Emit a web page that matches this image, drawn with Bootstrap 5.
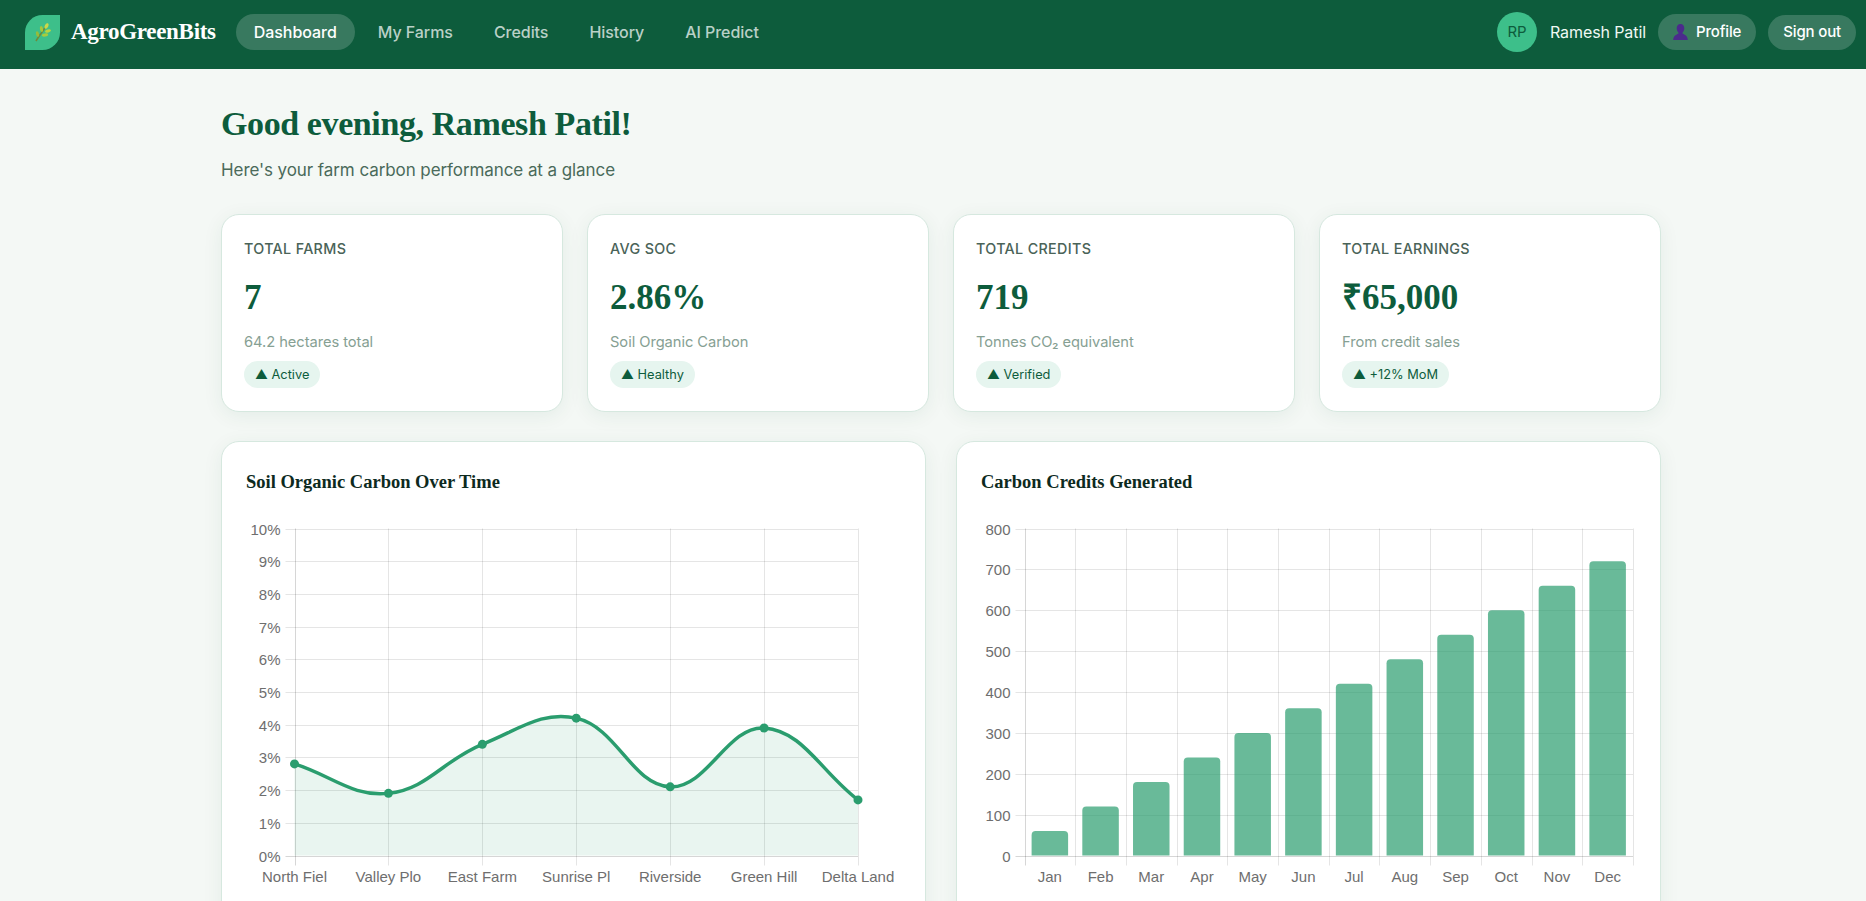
<!DOCTYPE html>
<html lang="en">
<head>
<meta charset="utf-8">
<title>AgroGreenBits</title>
<link href="https://cdn.jsdelivr.net/npm/bootstrap@5.3.0/dist/css/bootstrap.min.css" rel="stylesheet">
<style>
html{overflow:hidden;height:100%}
body{width:1882px;height:901px;overflow:hidden;background:#f4f8f5;font-family:Inter,"Noto Sans",sans-serif;color:#0d5c3c}
.serif{font-family:"Liberation Serif",serif;font-weight:700}
.topbar{height:69px;background:#0d5c3c;padding:0 26px 5px 25px}
.logo-leaf{width:35px;height:35px;background:#3dbf8a;border-radius:50% 0 50% 0}
.wordmark{font-size:23px;color:#fff;letter-spacing:-.3px;margin-left:11px;margin-right:20px}
.topbar .nav-link{color:rgba(255,255,255,.72);font-size:16px;font-weight:500;padding:0 18px;height:36px;line-height:36px;border-radius:18px;margin-right:5px;letter-spacing:-.05px}
.topbar .nav-link.active{color:#fff;background:rgba(255,255,255,.18)}
.avatar{width:40px;height:40px;background:#3dbf8a;color:#0d5c3c;font-size:15px}
.user-name{color:#f0f8f4;font-size:16px;margin:0 12px 0 13px;letter-spacing:-.1px}
.pill-btn{background:rgba(255,255,255,.18);color:#fff;font-size:15px;font-weight:500;border:0;border-radius:18px;height:36px;padding:0 15px;display:inline-flex;align-items:center;letter-spacing:-.15px}
.pill-btn:hover{background:rgba(255,255,255,.18);color:#fff}
.pill-btn.ms-gap{margin-left:12px;height:35px;padding:0 15px}
.pagewrap{width:1440px;margin:0 auto;padding-top:32px}
.greet{font-size:34px;line-height:46px;margin:0;color:#0d5c3c;letter-spacing:-.4px}
.greet-sub{font-size:17px;color:#4a6a5a;margin:11px 0 0;line-height:24px;letter-spacing:-.08px}
.stat-row{--bs-gutter-x:24px;margin-top:31.5px}
.stat-box{border:1px solid #d6e8df;border-radius:18px;box-shadow:0 4px 20px rgba(13,92,60,.07);height:198px;padding:23px 22px;background:#fff}
.stat-label{font-size:14.3px;font-weight:500;color:#4a6358;line-height:20px;letter-spacing:.35px;text-transform:uppercase;margin-top:1px}
.stat-value{font-size:35px;line-height:44px;margin-top:17px;color:#0d5c3c}
.stat-note{font-size:14.7px;color:#86a093;line-height:20px;margin-top:12px;letter-spacing:-.05px}
.stat-chip{background:#e6f5ef;color:#0d5c3c;font-size:12.8px;font-weight:400;height:27px;line-height:27px;padding:0 11px;border-radius:14px;margin-top:9px;display:inline-block}
.chart-row{gap:30px;margin-top:29px}
.chart-box{width:705px;flex:none;border:1px solid #d6e8df;border-radius:18px;box-shadow:0 4px 20px rgba(13,92,60,.07);background:#fff;padding:0 24px 24px}
.chart-title{font-size:18.5px;line-height:24px;color:#0d2a1e;margin:28px 0 0}
.chart-svg{display:block;margin-top:19px}
.chart-svg text{font-family:"Liberation Sans",sans-serif;font-size:15px;fill:#6e6e6e}
</style>
</head>
<body>
<nav class="navbar topbar d-flex flex-nowrap justify-content-between align-items-center">
  <div class="d-flex align-items-center">
    <a class="d-flex align-items-center text-decoration-none" href="#">
      <span class="logo-leaf d-flex align-items-center justify-content-center">
        <svg width="17" height="19" viewBox="0 0 17 19" aria-hidden="true">
          <path d="M2 18 C5 13 9 8 13 2" stroke="#6f8a3a" stroke-width="1.6" fill="none"/>
          <ellipse cx="12.5" cy="3" rx="1.7" ry="3" fill="#c9d84a" transform="rotate(25 12.5 3)"/>
          <ellipse cx="14" cy="8" rx="3" ry="1.6" fill="#b9d540" transform="rotate(-15 14 8)"/>
          <ellipse cx="7.5" cy="6" rx="1.6" ry="3" fill="#a4c83c" transform="rotate(-10 7.5 6)"/>
          <ellipse cx="11" cy="12" rx="3.2" ry="1.6" fill="#a8cc3e" transform="rotate(-10 11 12)"/>
          <ellipse cx="3.5" cy="11" rx="1.5" ry="2.8" fill="#94bc3c" transform="rotate(-15 3.5 11)"/>
        </svg>
      </span>
      <span class="wordmark serif">AgroGreenBits</span>
    </a>
    <ul class="nav flex-nowrap">
      <li class="nav-item"><a class="nav-link active" href="#">Dashboard</a></li>
      <li class="nav-item"><a class="nav-link" href="#">My Farms</a></li>
      <li class="nav-item"><a class="nav-link" href="#">Credits</a></li>
      <li class="nav-item"><a class="nav-link" href="#">History</a></li>
      <li class="nav-item"><a class="nav-link" href="#">AI Predict</a></li>
    </ul>
  </div>
  <div class="d-flex align-items-center">
    <span class="avatar rounded-circle d-flex align-items-center justify-content-center">RP</span>
    <span class="user-name">Ramesh Patil</span>
    <a class="btn pill-btn" href="#">
      <svg class="me-2" width="15" height="16" viewBox="0 0 15 16" aria-hidden="true"><path d="M7.5 0C10 0 11.3 2 11.3 4.3 11.3 6.2 10.5 7.8 9.6 8.6V9.8C11.6 10.6 14.6 11.5 14.8 16H.2C.4 11.5 3.4 10.6 5.4 9.8V8.6C4.5 7.8 3.7 6.2 3.7 4.3 3.7 2 5 0 7.5 0Z" fill="#4b2a8c"/></svg>
      Profile</a>
    <a class="btn pill-btn ms-gap" href="#">Sign out</a>
  </div>
</nav>

<main class="pagewrap">
  <h1 class="greet serif">Good evening, Ramesh Patil!</h1>
  <p class="greet-sub">Here's your farm carbon performance at a glance</p>

  <div class="row row-cols-4 stat-row">
    <div class="col"><div class="stat-box">
      <div class="stat-label">Total Farms</div><div class="stat-value serif">7</div>
      <div class="stat-note">64.2 hectares total</div><span class="stat-chip">▲ Active</span>
    </div></div>
    <div class="col"><div class="stat-box">
      <div class="stat-label">Avg SOC</div><div class="stat-value serif">2.86%</div>
      <div class="stat-note">Soil Organic Carbon</div><span class="stat-chip">▲ Healthy</span>
    </div></div>
    <div class="col"><div class="stat-box">
      <div class="stat-label">Total Credits</div><div class="stat-value serif">719</div>
      <div class="stat-note">Tonnes CO₂ equivalent</div><span class="stat-chip">▲ Verified</span>
    </div></div>
    <div class="col"><div class="stat-box">
      <div class="stat-label">Total Earnings</div><div class="stat-value serif">₹65,000</div>
      <div class="stat-note">From credit sales</div><span class="stat-chip">▲ +12% MoM</span>
    </div></div>
  </div>

  <div class="d-flex chart-row">
    <section class="chart-box">
      <h2 class="chart-title serif">Soil Organic Carbon Over Time</h2>
      <svg id="socChart" class="chart-svg" width="655" height="400" role="img" aria-label="Soil organic carbon line chart"></svg>
    </section>
    <section class="chart-box">
      <h2 class="chart-title serif">Carbon Credits Generated</h2>
      <svg id="creditChart" class="chart-svg" width="655" height="400" role="img" aria-label="Carbon credits bar chart"></svg>
    </section>
  </div>
</main>

<script src="https://cdn.jsdelivr.net/npm/bootstrap@5.3.0/dist/js/bootstrap.bundle.min.js"></script>
<script>
const NS='http://www.w3.org/2000/svg';
function add(svg,tag,attrs,txt){const e=document.createElementNS(NS,tag);for(const k in attrs)e.setAttribute(k,attrs[k]);if(txt!==undefined)e.textContent=txt;svg.appendChild(e);return e;}
const TOP=15.5,BOT=342.5,GRID='rgba(0,0,0,.1)',AXIS='rgba(0,0,0,.16)';
function yAxis(svg,L,R,n,step,suffix){
  for(let i=0;i<=n;i++){const y=Math.round(BOT-(BOT-TOP)*i/n)+.5;
    add(svg,'line',{x1:L-9,x2:R,y1:y,y2:y,stroke:i==0?AXIS:GRID});
    add(svg,'text',{x:L-14,y:y+5.5,'text-anchor':'end'},(i*step)+suffix);}
}
function vGrid(svg,xs){xs.forEach((x,i)=>{const xx=Math.round(x)+.5;add(svg,'line',{x1:xx,x2:xx,y1:TOP,y2:BOT+10,stroke:i==0?AXIS:GRID});});}

/* line chart */
(function(){
  const svg=document.getElementById('socChart'),L=48.5,R=612;
  const labels=['North Fiel','Valley Plo','East Farm','Sunrise Pl','Riverside','Green Hill','Delta Land'];
  const vals=[2.8,1.9,3.4,4.2,2.1,3.9,1.7];
  const xs=labels.map((_,i)=>L+(R-L)*i/6), ys=vals.map(v=>BOT-(BOT-TOP)*v/10);
  vGrid(svg,xs);yAxis(svg,L,R,10,1,'%');
  labels.forEach((t,i)=>add(svg,'text',{x:xs[i],y:369,'text-anchor':'middle'},t));
  const pts=xs.map((x,i)=>[x,ys[i]]),c=[];
  for(let i=0;i<pts.length;i++){
    const p0=pts[Math.max(i-1,0)],p=pts[i],p2=pts[Math.min(i+1,pts.length-1)];
    const d1=Math.hypot(p[0]-p0[0],p[1]-p0[1]),d2=Math.hypot(p2[0]-p[0],p2[1]-p[1]);
    const s=d1+d2,fa=.4*d1/s,fb=.4*d2/s;
    c.push({a:[p[0]-fa*(p2[0]-p0[0]),p[1]-fa*(p2[1]-p0[1])],b:[p[0]+fb*(p2[0]-p0[0]),p[1]+fb*(p2[1]-p0[1])]});
  }
  let d='M'+pts[0].join(' ');
  for(let i=1;i<pts.length;i++)d+=' C'+c[i-1].b.join(' ')+' '+c[i].a.join(' ')+' '+pts[i].join(' ');
  add(svg,'path',{d:d+` L${R} ${BOT} L${L} ${BOT}Z`,fill:'rgba(42,157,110,.1)'});
  add(svg,'path',{d:d,fill:'none',stroke:'#2a9d6e','stroke-width':3.5});
  pts.forEach(p=>add(svg,'circle',{cx:p[0],cy:p[1],r:4.5,fill:'#2a9d6e'}));
})();

/* bar chart */
(function(){
  const svg=document.getElementById('creditChart'),L=43.5,R=652;
  const labels=['Jan','Feb','Mar','Apr','May','Jun','Jul','Aug','Sep','Oct','Nov','Dec'];
  const w=(R-L)/12,bw=w*.72;
  vGrid(svg,Array.from({length:13},(_,i)=>L+w*i));yAxis(svg,L,R,8,100,'');
  labels.forEach((t,i)=>{
    const cx=L+w*(i+.5),h=(i+1)*60/800*(BOT-TOP),x=cx-bw/2,y=BOT-h,r=4;
    add(svg,'path',{d:`M${x} ${BOT}V${y+r}Q${x} ${y} ${x+r} ${y}H${x+bw-r}Q${x+bw} ${y} ${x+bw} ${y+r}V${BOT}Z`,fill:'rgba(42,157,110,.7)'});
    add(svg,'text',{x:cx,y:369,'text-anchor':'middle'},t);
  });
})();
</script>
</body>
</html>
